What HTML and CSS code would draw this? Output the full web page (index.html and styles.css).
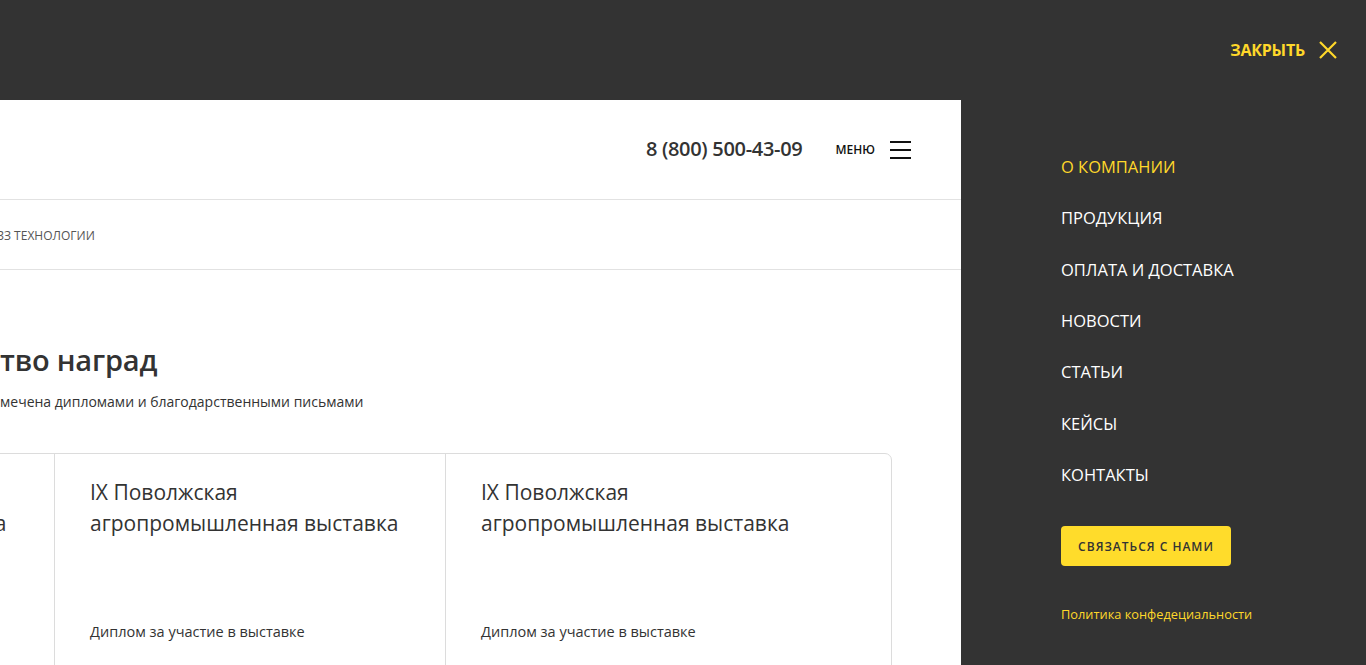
FILE: index.html
```html
<!DOCTYPE html>
<html lang="ru">
<head>
<meta charset="utf-8">
<title>Награды</title>
<link rel="stylesheet" href="styles.css">
</head>
<body>
<div class="topbar">
  <a class="close" href="#">
    <span class="close-text">ЗАКРЫТЬ</span>
    <svg class="close-icon" width="18" height="18" viewBox="0 0 18 18" aria-hidden="true">
      <path d="M1 1L17 17M17 1L1 17" stroke="#ffd82a" stroke-width="2.2" fill="none"/>
    </svg>
  </a>
</div>
<div class="main">
  <div class="page">
    <header class="header">
      <span class="phone">8 (800) 500-43-09</span>
      <span class="menu-label">МЕНЮ</span>
      <span class="burger"><i></i><i></i><i></i></span>
    </header>
    <div class="crumbs"><span class="crumb">ЗЗ ТЕХНОЛОГИИ</span></div>
    <section class="content">
      <h1 class="title">тво наград</h1>
      <p class="subtitle">мечена дипломами и благодарственными письмами</p>
      <div class="cards">
        <div class="card">
          <div class="card-title">IX Поволжская агропромышленная выставка</div>
          <div class="card-text">Диплом за участие в выставке</div>
        </div>
        <div class="card">
          <div class="card-title">IX Поволжская агропромышленная выставка</div>
          <div class="card-text">Диплом за участие в выставке</div>
        </div>
        <div class="card card-last">
          <div class="card-title">IX Поволжская агропромышленная выставка</div>
          <div class="card-text">Диплом за участие в выставке</div>
        </div>
      </div>
    </section>
  </div>
  <nav class="menu">
    <ul class="menu-list">
      <li><a class="menu-link active" href="#">О КОМПАНИИ</a></li>
      <li><a class="menu-link" href="#">ПРОДУКЦИЯ</a></li>
      <li><a class="menu-link" href="#">ОПЛАТА И ДОСТАВКА</a></li>
      <li><a class="menu-link" href="#">НОВОСТИ</a></li>
      <li><a class="menu-link" href="#">СТАТЬИ</a></li>
      <li><a class="menu-link" href="#">КЕЙСЫ</a></li>
      <li><a class="menu-link" href="#">КОНТАКТЫ</a></li>
    </ul>
    <a class="btn" href="#">СВЯЗАТЬСЯ С НАМИ</a>
    <a class="policy" href="#">Политика конфедециальности</a>
  </nav>
</div>
</body>
</html>
```
FILE: styles.css
```css
* { box-sizing: border-box; }
html, body {
  margin: 0;
  padding: 0;
  height: 665px;
  overflow: hidden;
  background: #333333;
  font-family: "Open Sans", "Noto Sans", sans-serif;
  color: #333333;
}
a { text-decoration: none; }

.topbar {
  height: 100px;
  display: flex;
  justify-content: flex-end;
  align-items: center;
  padding-right: 29px;
}
.close {
  display: flex;
  align-items: center;
  gap: 14px;
  color: #ffd82a;
}
.close-text {
  font-size: 16px;
  font-weight: 700;
  letter-spacing: -0.2px;
}
.close-icon { display: block; }

.main {
  display: flex;
  height: 565px;
}
.page {
  width: 961px;
  flex: none;
  background: #ffffff;
  overflow: hidden;
}
.header {
  height: 100px;
  border-bottom: 1px solid #e2e2e2;
  display: flex;
  justify-content: flex-end;
  align-items: center;
  padding-right: 50px;
}
.phone {
  font-size: 20px;
  font-weight: 600;
  margin-right: 33px;
  letter-spacing: -0.3px;
  margin-top: -3px;
}
.menu-label {
  font-size: 12px;
  font-weight: 600;
  margin-right: 15px;
  color: #111;
}
.burger {
  display: flex;
  flex-direction: column;
  gap: 6px;
  width: 21px;
}
.burger i {
  display: block;
  height: 2px;
  background: #111;
}
.crumbs {
  height: 70px;
  border-bottom: 1px solid #e2e2e2;
  display: flex;
  align-items: center;
  margin-left: -3px;
  padding-top: 2px;
}
.crumb {
  font-size: 12px;
  color: #555;
}
.content {
  padding-top: 72px;
}
.title {
  margin: 0 0 14px 0;
  font-size: 29px;
  line-height: 36px;
  font-weight: 600;
  letter-spacing: -0.2px;
}
.subtitle {
  margin: 0 0 41px 0;
  font-size: 14px;
  line-height: 20px;
}
.cards {
  display: flex;
  margin-left: -338px;
  width: 1230px;
  border: 1px solid #dcdcdc;
  border-radius: 7px;
  height: 260px;
}
.card {
  width: 391px;
  flex: none;
  padding: 23px 36px 0 35px;
  border-left: 1px solid #dcdcdc;
  display: flex;
  flex-direction: column;
}
.card:first-child { border-left: none; }
.card-last { flex: 1; width: auto; }
.card-title {
  font-size: 21px;
  line-height: 31px;
  font-weight: 500;
  height: 145px;
  max-width: 320px;
}
.card-text {
  font-size: 14.5px;
  line-height: 20px;
}

.menu {
  flex: 1;
  padding: 41px 0 0 100px;
  display: flex;
  flex-direction: column;
  align-items: flex-start;
}
.menu-list {
  list-style: none;
  margin: 0;
  padding: 0;
}
.menu-list li {
  height: 51.3px;
  display: flex;
  align-items: center;
}
.menu-link {
  color: #ffffff;
  font-size: 16.5px;
  font-weight: 500;
}
.menu-link.active { color: #ffd82a; }
.btn {
  margin-top: 26px;
  width: 170px;
  height: 40px;
  border-radius: 4px;
  background: #ffdc2b;
  color: #333;
  font-size: 12px;
  font-weight: 600;
  letter-spacing: 1px;
  display: flex;
  align-items: center;
  justify-content: center;
}
.policy {
  margin-top: 39px;
  font-size: 12.8px;
  color: #ffd82a;
}
```
